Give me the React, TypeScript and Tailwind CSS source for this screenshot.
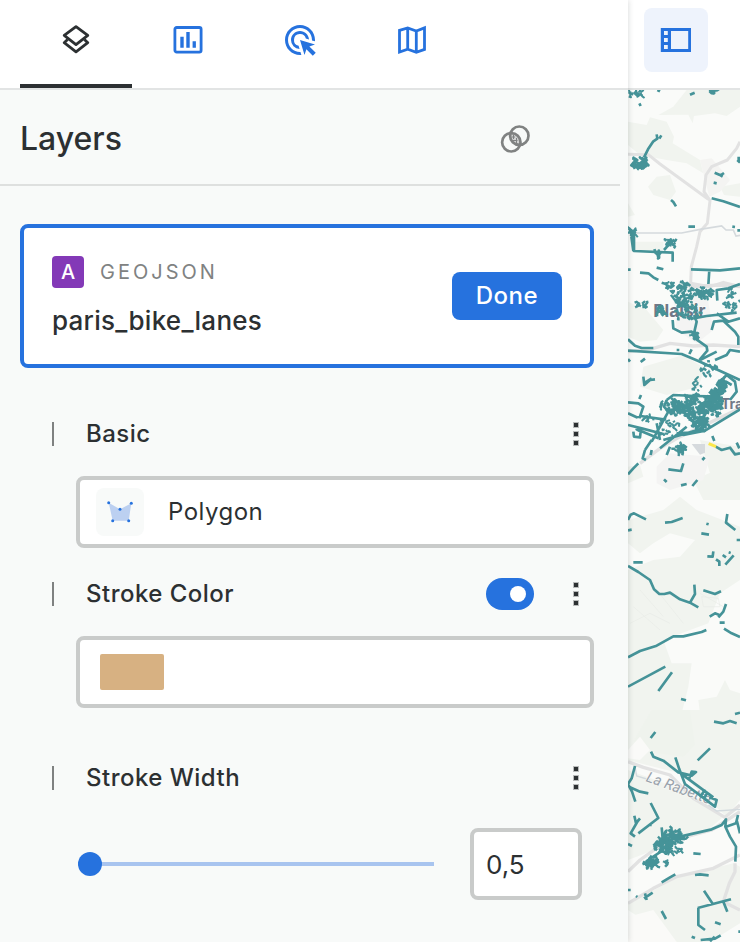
import { useState, type ReactNode } from "react";
import { MdAdsClick } from "react-icons/md";

function LayersIcon() {
  return (
    <svg className="size-8" viewBox="0 0 32 32" fill="none" stroke="currentColor" strokeWidth="2.8" strokeLinejoin="round">
      <path d="M16 2.6 27.8 11.3 16 20.600 4.2 11.3Z" />
      <path d="M7.6 15.4 4.2 18.7 16 27.8l11.8-9.1-3.400-3.300" />
    </svg>
  );
}

function ChartIcon() {
  return (
    <svg className="size-8" viewBox="0 0 32 32" fill="currentColor">
      <rect x="2.9" y="3.5" width="26.2" height="24.6" rx="1.8" fill="none" stroke="currentColor" strokeWidth="2.8" />
      <path d="M8.3 12.7h3.4v11H8.3zM14.3 8h3.4v15.7h-3.4zM20.6 17.3h3.3v6.4h-3.3z" />
    </svg>
  );
}

function MapIcon() {
  return (
    <svg className="size-8" viewBox="0 0 32 32" fill="none" stroke="currentColor" strokeWidth="2.8">
      <path d="M3.5 6.4 11.7 3.9l8.6 3.1 8.2-3.1V25.4l-8.2 2.8-8.6-3-8.2 2.8ZM11.7 3.9v21.3M20.3 7v21.2" />
    </svg>
  );
}

function PanelIcon() {
  return (
    <svg className="size-8" viewBox="0 0 32 32" fill="currentColor">
      <path fillRule="evenodd" d="M.8 4H31v24H.8ZM4 7v4h3.8V7Zm0 7v4h3.8v-4Zm0 7v4h3.8v-4Zm7-14v18h17.2V7Z" />
    </svg>
  );
}

function BlendIcon() {
  return (
    <svg className="size-8" viewBox="0 0 32 32" fill="none" stroke="currentColor" strokeWidth="2.7">
      <path d="M11.6 10.4a9 9 0 0 1 8.6 12.3 9 9 0 0 1-8.6-12.3Z" fill="#d2d3d3" stroke="none" />
      <path d="M13 14h3M14 17.5h4.5M16 21h3M14.5 12v4M17.5 15v6" strokeWidth="1" />
      <circle cx="12.3" cy="19.3" r="9.2" />
      <circle cx="20.3" cy="12.7" r="9.2" />
    </svg>
  );
}

function PolygonIcon() {
  return (
    <svg className="size-12" viewBox="0 0 48 48" fill="#2672de">
      <path d="M12.7 14.7 24 21.3 35.3 15.3 32.7 32.7H16.7Z" fill="#bcd0f1" />
      <circle cx="12.7" cy="14.7" r="1.5" />
      <circle cx="24" cy="21.3" r="1.5" />
      <circle cx="35.3" cy="15.3" r="1.5" />
      <circle cx="32.7" cy="32.7" r="1.5" />
      <circle cx="16.7" cy="32.7" r="1.5" />
    </svg>
  );
}

function Kebab({ label }: { label: string }) {
  return (
    <button type="button" aria-label={label} className="flex h-8 w-9 shrink-0 flex-col items-center justify-center gap-[3px]">
      <span className="size-1.5 border border-[#b9bbbb] bg-[#2c3032]" />
      <span className="size-1.5 border border-[#b9bbbb] bg-[#2c3032]" />
      <span className="size-1.5 border border-[#b9bbbb] bg-[#2c3032]" />
    </button>
  );
}

function SectionTitle({ title, children }: { title: string; children?: ReactNode }) {
  return (
    <div className="flex h-8 items-center pl-8">
      <span className="h-6 w-0.5 bg-[#7f8181]" />
      <h2 className="ml-8 flex-1 text-2xl font-medium tracking-[0.02em]">{title}</h2>
      {children}
      <Kebab label={`${title} options`} />
    </div>
  );
}

// Short street segments scattered over an ellipse, stable between renders.
function streets(cx: number, cy: number, rx: number, ry: number, count: number, seed: number) {
  let s = seed;
  const next = () => {
    s = (s * 16807) % 2147483647;
    return s / 2147483647;
  };
  let d = "";
  for (let i = 0; i < count; i++) {
    const a = next() * Math.PI * 2;
    const r = Math.sqrt(next());
    const x = cx + Math.cos(a) * r * rx;
    const y = cy + Math.sin(a) * r * ry;
    d += `M${x.toFixed(1)} ${y.toFixed(1)}l${(next() * 20 - 10).toFixed(1)} ${(next() * 20 - 10).toFixed(1)}l${(next() * 14 - 7).toFixed(1)} ${(next() * 14 - 7).toFixed(1)}`;
  }
  return d;
}

function Basemap() {
  return (
    <svg className="absolute inset-0 size-full" viewBox="0 0 112 852" preserveAspectRatio="xMinYMin slice" role="img" aria-label="Map of bike lanes">
      <rect width="112" height="852" fill="#fafbf9" />

      <g transform="translate(-8 -10) scale(.33333)">
        <g fill="#f1f4ef">
          <path d="M200 30H360V80L320 108 285 100 222 108 218 130 205 104 115 105 160 80Z" />
          <path d="M24 125 80 135 90 112 140 125 162 170 158 190 240 240 250 280 200 250 140 240 60 225 24 195Z" />
          <path d="M84 320 110 290 150 285 168 335 150 360 100 345Z" />
          <path d="M300 320 360 310V350L312 345ZM24 370 45 405 24 410ZM44 485H130V510H44Z" />
        </g>
        <path d="M240 240 275 235 330 300 300 335 268 350Z" fill="#f4f4f2" />
        <g fill="none" stroke="#e2e2e2" strokeWidth="9" strokeLinejoin="round">
          <path d="M24 223 85 224 120 252 265 358M360 185 350 205 322 240 275 260 258 285 252 335 270 362 262 430 240 455 230 500 214 560 212 610 270 620 310 607 360 620" />
        </g>
        <path d="M24 459H185L240 448 305 438 318 450 340 450 348 468 360 466" fill="none" stroke="#d5dadd" strokeWidth="5" />
        <g fill="none" stroke="#459398" strokeWidth="8" strokeLinejoin="round">
          <path d="M72 232 84 208 100 184 112 176 110 163M118 176 124 166M275 355 310 364 360 381M284 278 298 284 308 290M300 287 312 279M281 308 290 310M153 360 160 366 168 379M205 440H225M42 450V513L158 518V545M40 513 34 470M112 520 116 538M132 510 150 490M110 563 130 568M213 568 300 571 360 565M268 570 265 615M60 578 85 580 100 592 115 600M125 608 138 612M337 440 345 441M352 451H360M24 569H32M112 30 120 34M58 70 62 78M210 44 224 38M352 240 360 248M356 230V245" />
          <path d={streets(60, 251, 20, 16, 48, 11)} />
          <path d={streets(35, 459, 6, 10, 18, 41)} strokeWidth="6" />
          <path d={streets(150, 486, 14, 9, 20, 5)} strokeWidth="7" />
          <path d={streets(55, 40, 16, 6, 13, 8)} strokeWidth="6" />
          <path d={streets(30, 45, 6, 6, 6, 14)} strokeWidth="6" />
          <path d={streets(281, 34, 10, 3, 8, 9)} />
          <path d={streets(114, 525, 6, 8, 6, 2)} />
        </g>
      </g>

      <g transform="translate(-8 190) scale(.33333)">
        <g fill="#f1f4ef">
          <path d="M24 65 80 90 130 150 110 180 60 185 24 170ZM70 260 190 225 255 265 235 320 140 345 60 320ZM240 480 360 500V560L270 580Z" />
          <path d="M220 600 360 540V660H250ZM24 560 60 555 70 590 24 610Z" />
        </g>
        <path d="M110 560 150 520 270 530 250 600 150 630 110 610ZM160 60 260 40 280 150 230 190 170 150Z" fill="#f4f4f3" />
        <path d="M24 215 100 205 150 190 220 198 280 195 360 200M190 10 215 20 300 15 360 20M60 550 120 505 180 470 360 385" fill="none" stroke="#e2e2e2" strokeWidth="10" />
        <path d="M215 492H255V518L240 524Z" fill="#d6dadd" />
        <text x="100" y="110" fontFamily="Inter, sans-serif" fontWeight="700" fontSize="52" fill="#707887" stroke="#fafbf9" strokeWidth="5" paintOrder="stroke">Plaisir</text>
        <text x="303" y="387" fontFamily="Inter, sans-serif" fontWeight="700" fontSize="42" fill="#707887">Tra</text>
        <g fill="none" stroke="#459398" strokeWidth="8" strokeLinejoin="round">
          <path d="M24 178 45 197 65 204H100M24 212 185 222 235 243 360 300M62 246 75 236M70 290 73 315 90 300 105 298M75 308 95 295M58 357 63 345M208 222 215 208M170 210H178" />
          <path d="M158 120 160 145 185 158 215 155 235 175M222 105 230 125 222 160 225 175 260 200 262 212 238 240M240 240 290 215M275 150 282 125 310 122 345 155 355 170V195M285 240 320 225 330 210 360 215M220 115 260 108 350 98M290 100 325 125 360 115M292 62 290 30 325 25 360 12" />
          <path d="M24 367 55 370 70 380 58 415M24 400 50 412 62 408 130 418M24 435 65 445 130 462M40 455 42 470 60 472 62 455 50 448 115 475M95 485 145 395M120 505 200 440M75 510 95 480M75 510 68 535 78 540M95 510 92 525M150 500 140 525M24 583 40 565 55 550M140 360 160 345 225 348 300 350M140 360 132 380 145 395M190 465 255 452 360 388M170 460 230 456M130 480 200 460 250 445M110 430 120 480" />
          <path d="M300 340 295 310 320 285 345 305 350 335 330 360M305 325 318 305 335 315M290 340 315 300M145 568 183 573 190 550M132 598 140 606M183 616 200 612M217 618 232 600M247 540 254 532M277 468 283 483M287 500 305 510 330 503 345 523 360 520M350 488 358 505M24 237 30 245" />
          <path d={streets(190, 45, 30, 38, 62, 19)} strokeWidth="7" />
          <path d={streets(200, 90, 38, 26, 34, 71)} strokeWidth="7" />
          <path d={streets(255, 38, 24, 16, 40, 27)} strokeWidth="7" />
          <path d={streets(150, 14, 16, 10, 14, 31)} strokeWidth="6" />
          <path d={streets(335, 60, 22, 40, 28, 37)} strokeWidth="6" />
          <path d={streets(120, 92, 12, 8, 18, 13)} strokeWidth="7" />
          <path d={streets(66, 75, 15, 4, 9, 17)} strokeWidth="7" />
          <path d={streets(283, 365, 20, 40, 105, 23)} />
          <path d={streets(308, 318, 14, 26, 30, 89)} strokeWidth="7" />
          <path d={streets(228, 385, 40, 40, 110, 29)} strokeWidth="8" />
          <path d={streets(162, 385, 24, 24, 60, 43)} strokeWidth="7" />
          <path d={streets(240, 430, 22, 16, 40, 47)} />
          <path d={streets(180, 505, 14, 12, 28, 53)} strokeWidth="7" />
          <path d={streets(145, 440, 36, 28, 24, 59)} strokeWidth="6" />
          <path d={streets(85, 414, 12, 4, 8, 61)} strokeWidth="6" />
          <path d={streets(228, 315, 14, 22, 9, 67)} strokeWidth="6" />
          <path d={streets(265, 265, 22, 18, 15, 73)} strokeWidth="7" />
          <path d={streets(225, 165, 10, 10, 12, 79)} strokeWidth="6" />
          <path d={streets(120, 380, 4, 6, 5, 83)} strokeWidth="6" />
        </g>
        <path d="M266 491 288 500" stroke="#fbe74a" strokeWidth="9" />
      </g>

      <g transform="translate(-8 400) scale(.33333)">
        <g fill="#f1f4ef">
          <path d="M24 90 60 80 130 60 180 20 230 60 360 110V270L300 310 265 400 130 450 24 500V240L100 210 180 200 225 150 150 130 100 160 60 190 24 160Z" />
          <path d="M24 500 130 450 155 520 215 520 205 590 180 690H24ZM315 570 330 600 360 610V660L240 670 235 630 290 620Z" />
        </g>
        <path d="M60 300 130 380M40 350 120 420M110 300 190 400M240 310 310 350M30 400 90 370 150 400M245 320 295 325 300 350 250 350Z" fill="none" stroke="#e8ebe7" strokeWidth="2" />
        <g fill="none" stroke="#459398" strokeWidth="8" strokeLinejoin="round">
          <path d="M24 90 32 74 42 70 78 88M24 121 35 119M135 98 155 96 188 84M259 101 266 103M244 130 267 134M322 72 318 98 346 120M350 150H360M262 199 278 200 280 184M288 208 298 215V228M316 224 341 196M308 195 318 202M326 187 332 189M40 217H68M24 228 55 246 90 270 102 298 118 312 133 312 150 308 180 328 210 338 235 352M210 338 225 312 223 284M250 301 285 312 303 304M269 380 285 370 298 375M295 382 310 365 318 342M299 398H314M312 416 335 430 360 441M24 502 60 483 110 467 160 439 190 439 245 426 259 420M24 590 136 530M115 603 156 547M183 627 198 631M345 670 360 668M280 688H288M320 688H338" />
        </g>
      </g>

      <g transform="translate(-8 620) scale(.33333)">
        <g fill="#f1f4ef">
          <path d="M24 0H360V270L320 320 180 190 80 165 24 150Z" />
          <path d="M24 180 190 240 310 320 270 355 50 440 24 450ZM24 580 180 500 340 460 360 470V640L270 696H170L24 600Z" />
        </g>
        <path d="M95 0H210L225 105 190 140 110 130 40 95 60 60Z" fill="#eff3ed" />
        <path d="M24 120 60 80 90 120 60 150 24 145ZM24 620 100 600 170 696H24Z" fill="#fafaf8" />
        <g fill="none" stroke="#e2e2e2" strokeWidth="10" strokeLinejoin="round">
          <path d="M24 155 70 172 150 195 220 265 315 322 360 285M24 485 60 450 130 400 200 380 275 360 360 305M24 580 100 535 170 500 280 475 360 435M345 460V485L328 520 310 575 360 600" />
        </g>
        <path d="M45 170 50 198 90 210M265 285 290 303 360 298" fill="none" stroke="#d3dade" strokeWidth="4" />
        <text transform="translate(76 213) rotate(20)" fontFamily="Roboto, sans-serif" fontStyle="italic" fontSize="44" fill="#98a1aa" stroke="#f7f8f6" strokeWidth="4" paintOrder="stroke">La Rabette</text>
        <g fill="none" stroke="#459398" strokeWidth="8" strokeLinejoin="round">
          <path d="M92 84 106 66M93 125 100 140 130 152 175 187 215 197 228 186 215 185 208 205M166 142 178 178 195 222 285 290 290 270 268 262M178 187 280 262M240 262 255 238M250 268 262 248M233 151 270 115M282 35 310 40 330 33 350 40M345 12 360 8M45 168 35 205 24 222 36 245 46 275M30 232 60 245 85 250M92 279 115 324 55 370M43 317 48 340 60 325M55 330 32 370 45 380M24 402 36 408M125 352 128 385M90 345 95 345M170 382 275 358 305 345 318 328 316 350 330 380 348 410 346 455M318 350 348 340 354 315M350 330 360 370M220 430 242 432M225 495 240 493 266 496M125 517 150 502 166 493M72 565 98 548M75 550 80 570M24 540H32M48 558 52 561M125 603 138 627M252 542 277 580M233 594 333 568M310 575 322 605M235 594V645L255 660M285 637 302 643M215 680 225 684M242 690 285 686 302 676M270 694 284 680M355 665H360M130 420 100 440 78 455" />
          <path d={streets(158, 385, 34, 24, 75, 97)} strokeWidth="7" />
          <path d={streets(130, 408, 28, 18, 60, 101)} />
          <path d={streets(94, 455, 15, 14, 38, 103)} strokeWidth="7" />
          <path d={streets(165, 425, 22, 8, 14, 107)} strokeWidth="6" />
          <path d={streets(140, 455, 8, 7, 6, 109)} strokeWidth="6" />
        </g>
      </g>
    </svg>
  );
}

export default function App() {
  const [tab, setTab] = useState("Layers");
  const [strokeOn, setStrokeOn] = useState(true);
  const [width, setWidth] = useState("0,5");

  const tabs = [
    { name: "Layers", icon: <LayersIcon /> },
    { name: "Widgets", icon: <ChartIcon /> },
    { name: "Interactions", icon: <MdAdsClick className="size-9" /> },
    { name: "Basemaps", icon: <MapIcon /> },
  ];

  return (
    <div className="flex min-h-screen bg-white font-[Inter,'Liberation_Sans',sans-serif] text-[#2c3032]">
      <aside className="relative z-10 flex w-[628px] shrink-0 flex-col bg-[#f8faf9] shadow-[0_0_6px_rgba(44,48,50,0.2)]">
        <nav className="flex h-[90px] border-b-2 border-[#e2e4e4] bg-white pl-5" aria-label="Editor sections">
          {tabs.map((t) => (
            <button
              key={t.name}
              type="button"
              aria-label={t.name}
              onClick={() => setTab(t.name)}
              className={
                tab === t.name
                  ? "flex w-28 items-center justify-center border-b-4 border-[#2c3032] pb-1 text-[#2c3032]"
                  : "flex w-28 items-center justify-center pb-2 text-[#2672de]"
              }
            >
              {t.icon}
            </button>
          ))}
        </nav>

        <header className="mr-2 flex h-24 items-center justify-between border-b-2 border-[#dee0df] pt-1 pr-[89px] pl-5">
          <h1 className="text-[32px] leading-10 font-medium">Layers</h1>
          <button type="button" aria-label="Layer blending" className="text-[#808282]">
            <BlendIcon />
          </button>
        </header>

        <main className="flex flex-col pt-[38px] pr-[34px] pb-10 pl-5">
          <section className="flex items-center justify-between rounded-lg border-4 border-[#2672de] bg-white p-7">
            <div>
              <div className="flex items-center gap-4">
                <span className="flex size-8 items-center justify-center rounded bg-[#8339b7] text-xl font-medium text-white">A</span>
                <span className="text-xl tracking-[3px] text-[#808282]">GEOJSON</span>
              </div>
              <p className="mt-[18px] text-[26px] leading-[30px] font-medium tracking-[0.01em]">paris_bike_lanes</p>
            </div>
            <button type="button" className="h-12 rounded-lg bg-[#2672de] px-6 text-2xl font-medium tracking-[0.02em] text-white">
              Done
            </button>
          </section>

          <div className="mt-[50px]">
            <SectionTitle title="Basic" />
            <button type="button" className="mt-[26px] ml-14 flex h-[72px] w-[calc(100%-56px)] items-center gap-6 rounded-lg border-4 border-[#c9cbca] bg-white px-4 text-2xl tracking-[0.02em]">
              <span className="rounded-lg bg-[#f8faf9]">
                <PolygonIcon />
              </span>
              Polygon
            </button>
          </div>

          <div className="mt-[30px]">
            <SectionTitle title="Stroke Color">
              <input
                type="checkbox"
                role="switch"
                aria-label="Enable stroke color"
                checked={strokeOn}
                onChange={(e) => setStrokeOn(e.target.checked)}
                className="mr-6 flex h-8 w-12 appearance-none items-center rounded-full bg-[#b0b4b4] px-2 before:size-4 before:rounded-full before:bg-white checked:justify-end checked:bg-[#2672de]"
              />
            </SectionTitle>
            <button type="button" aria-label="Stroke color" className="mt-[26px] ml-14 flex h-[72px] w-[calc(100%-56px)] items-center rounded-lg border-4 border-[#c9cbca] bg-white px-5">
              <span className="h-9 w-16 rounded-xs bg-[#d7b182]" />
            </button>
          </div>

          <div className="mt-[54px]">
            <SectionTitle title="Stroke Width" />
            <div className="mt-[34px] flex items-center gap-9 pr-3 pl-[58px]">
              <input
                type="range"
                aria-label="Stroke width"
                min="0"
                max="100"
                step="0.5"
                value={Number(width.replace(",", ".")) < 1 ? 0 : Number(width.replace(",", ".")) || 0}
                onChange={(e) => setWidth(e.target.value.replace(".", ","))}
                className="h-6 min-w-0 flex-1 appearance-none bg-[linear-gradient(#a8c4ef,#a8c4ef)] bg-[length:100%_4px] bg-center bg-no-repeat [&::-webkit-slider-thumb]:size-6 [&::-webkit-slider-thumb]:appearance-none [&::-webkit-slider-thumb]:rounded-full [&::-webkit-slider-thumb]:bg-[#2672de]"
              />
              <input
                type="text"
                aria-label="Stroke width value"
                value={width}
                onChange={(e) => setWidth(e.target.value)}
                className="h-[72px] w-28 rounded-lg border-4 border-[#c9cbca] bg-white px-3 text-[26px]"
              />
            </div>
          </div>
        </main>
      </aside>

      <div className="flex min-w-0 flex-1 flex-col">
        <div className="h-[90px] border-b-2 border-[#e2e4e4] bg-white px-4 py-2">
          <button type="button" aria-label="Toggle panel" className="flex size-16 items-center justify-center rounded-lg bg-[#eef3fc] text-[#2672de]">
            <PanelIcon />
          </button>
        </div>
        <div className="relative flex-1 overflow-hidden">
          <Basemap />
        </div>
      </div>
    </div>
  );
}
